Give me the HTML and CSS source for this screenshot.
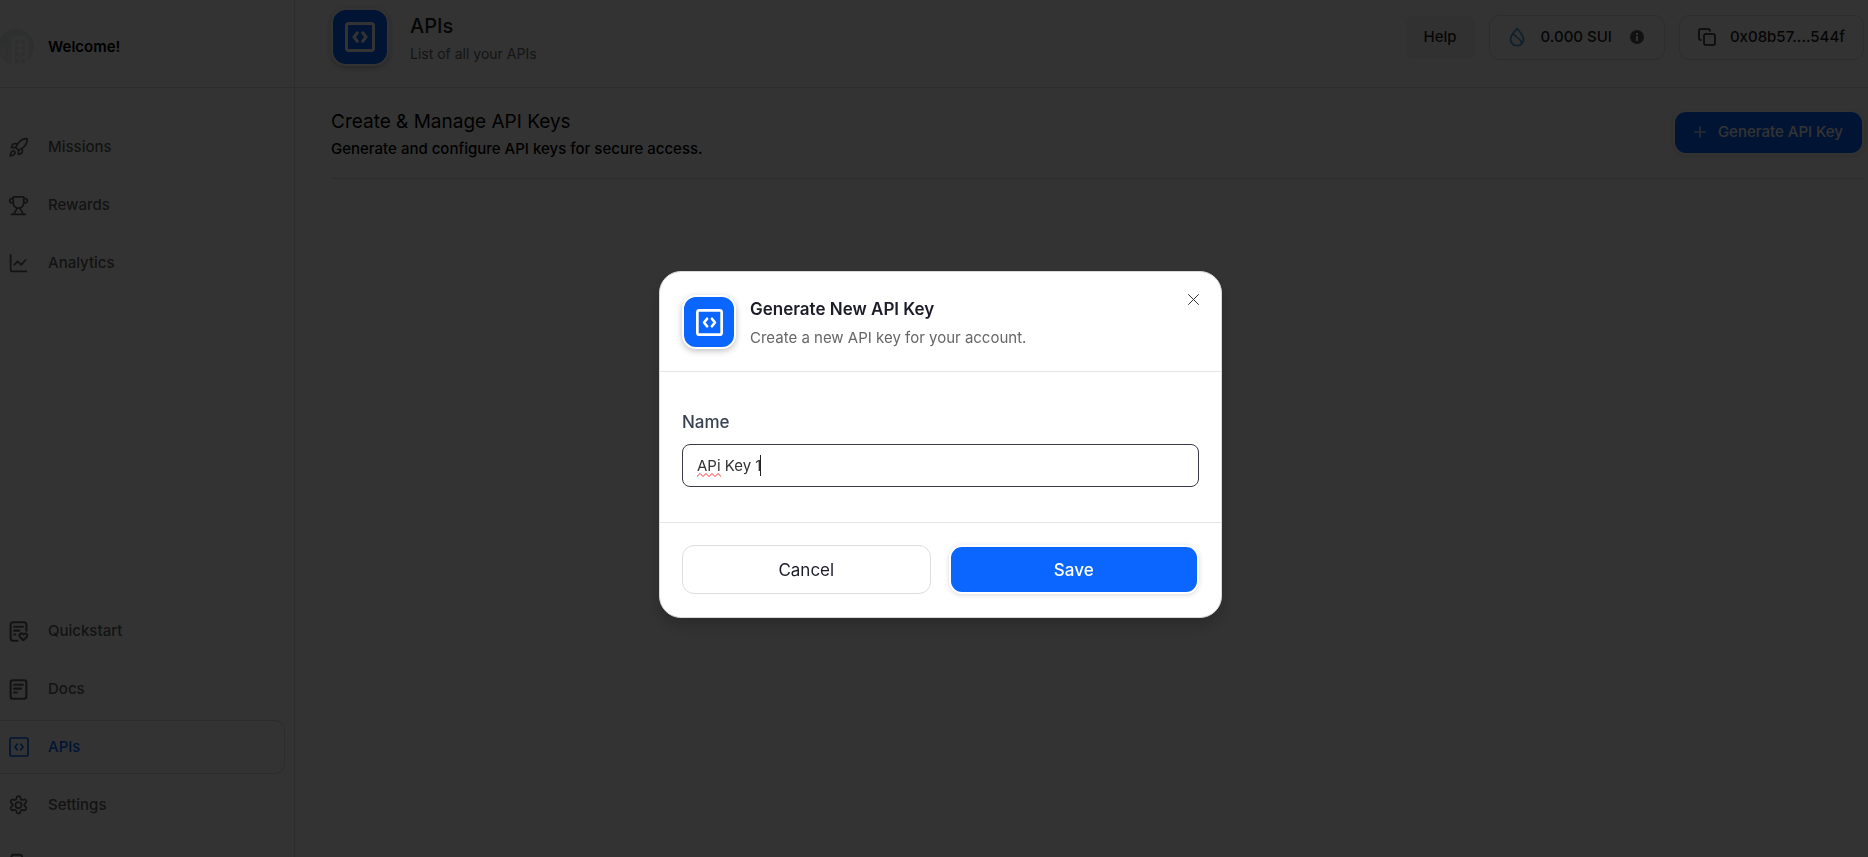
FILE: index.html
```html
<!DOCTYPE html>
<html lang="en">
<head>
<meta charset="utf-8">
<meta name="viewport" content="width=device-width, initial-scale=1">
<title>APIs</title>
<link rel="stylesheet" href="styles.css">
</head>
<body>
<svg class="sprite" aria-hidden="true">
  <symbol id="i-code" viewBox="0 0 20 20"><rect x="1" y="1" width="18" height="18" rx="1.5"/><path d="M8.2 7.2 6 10l2.2 2.8M11.8 7.2 14 10l-2.2 2.8"/></symbol>
</svg>
<div class="app">
  <aside class="sidebar">
    <div class="profile">
      <svg class="avatar" viewBox="0 0 36 36" aria-hidden="true">
        <defs><clipPath id="round"><circle cx="18" cy="18" r="18"/></clipPath></defs>
        <g clip-path="url(#round)">
          <rect width="36" height="36" fill="#e4e8ec"/>
          <path d="M13 36V9l2-2h13l2 2v27z" fill="#f7f7f8"/><path d="M0 16h12v20H0z" fill="#eef0f2"/>
          <g fill="#dfe4e8"><circle cx="19" cy="13" r="1.8"/><circle cx="25" cy="13" r="1.8"/><circle cx="19" cy="19" r="1.8"/><circle cx="25" cy="19" r="1.8"/><circle cx="19" cy="25" r="1.8"/><circle cx="25" cy="25" r="1.8"/><circle cx="19" cy="32" r="1.8"/><circle cx="25" cy="32" r="1.8"/><circle cx="9" cy="20" r="1.4"/><circle cx="9" cy="26" r="1.4"/><circle cx="9" cy="32" r="1.4"/></g>
        </g>
      </svg>
      <span>Welcome!</span>
    </div>
    <nav class="menu">
      <a href="#missions"><svg class="icon" viewBox="0 0 24 24"><path d="M4.5 16.5c-1.5 1.26-2 5-2 5s3.740-.5 5-2c.71-.84.7-2.130-.09-2.910a2.180 2.180 0 0 0-2.910-.09z"/><path d="m12 15-3-3a22 22 0 0 1 2-3.950A12.880 12.880 0 0 1 22 2c0 2.720-.78 7.500-6 11a22.350 22.350 0 0 1-4 2z"/><path d="M9 12H4s.55-3.030 2-4c1.620-1.080 5 0 5 0M12 15v5s3.030-.55 4-2c1.080-1.620 0-5 0-5"/></svg>Missions</a>
      <a href="#rewards"><svg class="icon" viewBox="0 0 24 24"><path d="M6 2h12v7a6 6 0 0 1-12 0zM6 4H4a2 2 0 0 0-2 2v.5A2.500 2.500 0 0 0 4.500 9H6M18 4h2a2 2 0 0 1 2 2v.5A2.500 2.500 0 0 1 19.500 9H18M4 22h16M10 15c0 3-3 3.500-3 7M14 15c0 3 3 3.500 3 7"/></svg>Rewards</a>
      <a href="#analytics"><svg class="icon" viewBox="0 0 24 24"><path d="M3 2v17a2 2 0 0 0 2 2h16M7 13.500l4-4 4 4L20 8"/></svg>Analytics</a>
    </nav>
    <nav class="menu menu-bottom">
      <a href="#quickstart"><svg class="icon icon-bold" viewBox="0 0 24 24"><path d="M21 11V4a2.500 2.500 0 0 0-2.500-2.500h-13A2.500 2.500 0 0 0 3 4v16a2.500 2.500 0 0 0 2.500 2.500H11M7 6.500h10M7 11h6M7 15.500h1.500M17.500 22l-3.800-3.800a2.300 2.300 0 0 1 3.300-3.300l.5.500.5-.5a2.300 2.300 0 0 1 3.300 3.300z"/></svg>Quickstart</a>
      <a href="#docs"><svg class="icon icon-bold" viewBox="0 0 24 24"><rect x="3" y="1.500" width="18" height="21" rx="2.500"/><path d="M7 6.500h10M7 11h8M7 15.500h3"/></svg>Docs</a>
      <a href="#apis" class="active" aria-current="page"><svg class="icon"><use href="#i-code"/></svg>APIs</a>
      <a href="#settings"><svg class="icon" viewBox="0 0 24 24"><path d="M9.700 3.200c.4-2.500 4.200-2.500 4.600 0l.2 1.200c.2 1 1.300 1.600 2.200 1.200l1.200-.4c2.300-.9 4.200 2.400 2.300 4l-1 .8c-.8.700-.8 1.900 0 2.600l1 .8c1.900 1.600 0 4.900-2.300 4l-1.200-.4c-.9-.4-2 .2-2.200 1.200l-.2 1.200c-.4 2.500-4.200 2.500-4.600 0l-.2-1.200c-.2-1-1.300-1.600-2.200-1.200l-1.200.4c-2.300.9-4.200-2.400-2.300-4l1-.8c.8-.7.8-1.900 0-2.600l-1-.8c-1.900-1.600 0-4.900 2.300-4l1.200.4c.9.400 2-.2 2.200-1.200z"/><circle cx="12" cy="11.500" r="3.500"/></svg>Settings</a>
      <a href="#logout" aria-label="Log out"><svg class="icon icon-bold" viewBox="0 0 24 24"><path d="M16 7V4a2 2 0 0 0-2-2H6a2 2 0 0 0-2 2v16a2 2 0 0 0 2 2h8a2 2 0 0 0 2-2v-3M10 12h12M19 9l3 3-3 3"/></svg></a>
    </nav>
  </aside>
  <main class="main">
    <header class="topbar">
      <span class="tile tile-lg"><svg><use href="#i-code"/></svg></span>
      <div class="heading"><h1>APIs</h1><p>List of all your APIs</p></div>
      <div class="actions">
        <button type="button" class="help">Help</button>
        <div class="pill"><svg class="drop" viewBox="0 0 16 20"><path d="M8 1.500c3 3.500 6.500 7 6.500 10.700a6.500 6.500 0 0 1-13 0C1.500 8.500 5 5 8 1.500zM4.500 6.500c0 3 8.500 5 8 10"/></svg><span>0.000 SUI</span><svg class="info" viewBox="0 0 14 14"><circle cx="7" cy="7" r="7"/><path d="M6 3h2v2H6zM6 6h2v5H6z"/></svg></div>
        <button type="button" class="pill wallet"><svg class="copy" viewBox="0 0 18 18"><rect x="6" y="6" width="11" height="11" rx="1.500"/><path d="M3 12H2.500A1.500 1.500 0 0 1 1 10.500v-8A1.500 1.500 0 0 1 2.500 1h8A1.500 1.500 0 0 1 12 2.500V3"/></svg><span>0x08b57....544f</span></button>
      </div>
    </header>
    <section class="section">
      <div class="section-text"><h2>Create &amp; Manage API Keys</h2><p>Generate and configure API keys for secure access.</p></div>
      <button type="button" class="primary generate"><svg viewBox="0 0 12 12"><path d="M6 0v12M0 6h12"/></svg>Generate API Key</button>
    </section>
  </main>
</div>
<div class="overlay">
  <form class="modal" role="dialog" aria-modal="true" aria-labelledby="modal-title">
    <div class="modal-head">
      <span class="tile"><svg><use href="#i-code"/></svg></span>
      <div class="modal-text"><h2 id="modal-title">Generate New API Key</h2><p>Create a new API key for your account.</p></div>
      <button type="button" class="close" aria-label="Close"><svg viewBox="0 0 11 11"><path d="M.5.5l10 10M10.500.5l-10 10"/></svg></button>
    </div>
    <div class="modal-body">
      <label for="key-name">Name</label>
      <div class="field">
        <input id="key-name" type="text" value="APi Key 1" spellcheck="false">
        <svg class="squiggle" viewBox="0 0 24 4" aria-hidden="true"><path d="M0 3.500l3-3 3 3 3-3 3 3 3-3 3 3 3-3 3 3"/></svg>
        <span class="caret"></span>
      </div>
    </div>
    <div class="modal-foot">
      <button type="button" class="cancel">Cancel</button>
      <button type="submit" class="primary save">Save</button>
    </div>
  </form>
</div>
</body>
</html>
```
FILE: styles.css
```css
* { box-sizing: border-box; }
body { margin: 0; overflow: hidden; background: #fff; color: #000; font: 500 15px/20px Inter, "Liberation Sans", sans-serif; }
h1, h2, p { margin: 0; }
button, input { font: inherit; color: inherit; }
button { cursor: pointer; }
svg { fill: none; stroke: currentColor; stroke-linecap: round; stroke-linejoin: round; flex: none; }
.sprite { position: absolute; width: 0; height: 0; }

.app { display: flex; height: 100vh; }
.sidebar { width: 295px; flex: none; display: flex; flex-direction: column; border-right: 1px solid #dedede; }
.profile { height: 88px; flex: none; display: flex; align-items: center; gap: 14px; padding-top: 6px; border-bottom: 1px solid #d9dbdd; font-weight: 600; }
.avatar { width: 36px; height: 36px; margin-left: -2px; stroke: none; }
.menu { display: flex; flex-direction: column; gap: 4px; padding: 32px 9px 0 0; }
.menu-bottom { margin-top: auto; margin-bottom: -33px; padding-top: 0; }
.menu a { height: 54px; flex: none; display: flex; align-items: center; gap: 19px; padding-left: 8px; border: 1px solid transparent; border-left: 0; border-radius: 0 10px 10px 0; color: #5f5f5f; text-decoration: none; }
.menu a.active { padding-left: 9px; color: #0a66ff; border-color: #d9d9d9; background: #fcfcfc; }
.icon { width: 21px; height: 21px; stroke-width: 2; }
.icon-bold { stroke-width: 2.4; }
.active .icon { width: 20px; height: 20px; stroke-width: 1.7; }

.main { flex: 1; min-width: 0; }
.topbar { height: 88px; display: flex; align-items: center; padding: 0 4px 13px 36px; border-bottom: 1px solid #dedede; }
.tile { width: 54px; height: 54px; flex: none; display: flex; align-items: center; justify-content: center; border: 2px solid #fff; border-radius: 14px; background: #0a66ff; color: #fff; box-shadow: 0 2px 6px rgba(0, 0, 0, .25); }
.tile svg { width: 27px; height: 27px; stroke-width: 2; }
.tile-lg { width: 58px; height: 58px; border-radius: 15px; }
.tile-lg svg { width: 30px; height: 30px; }
.heading { margin-left: 21px; padding-top: 2px; }
h1 { font-size: 20px; line-height: 28px; font-weight: 500; color: #222; }
.heading p { margin-top: 4px; font-size: 14px; font-weight: 400; color: #666; }
.actions { display: flex; align-items: center; gap: 14px; margin-left: auto; color: #222; }
.help { height: 43px; padding: 0 18px; border: 0; border-radius: 8px; background: #f4f4f4; }
.pill { height: 45px; display: flex; align-items: center; gap: 16px; padding: 0 20px 0 19px; border: 1px solid #dedede; border-radius: 10px; background: #fff; }
.drop { width: 16px; height: 20px; stroke: #4da2db; stroke-width: 1.8; }
.info { width: 14px; height: 14px; margin-left: 2px; fill: #555; stroke: none; }
.info path { fill: #fff; }
.copy { width: 18px; height: 18px; stroke-width: 1.5; }
.wallet { gap: 14px; padding: 0 18px; }
.section { display: flex; align-items: center; justify-content: space-between; height: 91px; margin: 0 4px 0 36px; border-bottom: 1px solid #dedede; }
.section-text { padding-top: 4px; }
.section h2 { font-size: 19px; line-height: 28px; font-weight: 400; }
.section p { line-height: 26px; }
.primary { border: 2px solid #fff; border-radius: 13px; background: #0a66ff; color: #fff; box-shadow: 0 1px 5px rgba(0, 0, 0, .15); }
.generate { height: 45px; display: flex; align-items: center; gap: 12px; margin-bottom: 2px; padding: 0 19px; }
.generate svg { width: 12px; height: 12px; stroke-width: 1.2; }

.overlay { position: fixed; inset: 0; display: flex; align-items: center; justify-content: center; padding: 32px 0 0 13px; background: rgba(0, 0, 0, .8); }
.modal { width: 563px; max-width: 100%; border: 1px solid #d9d9d9; border-radius: 22px; background: #fff; box-shadow: 0 8px 16px rgba(0, 0, 0, .2); }
.modal-head { display: flex; align-items: flex-start; padding: 23px 22px 20px; border-bottom: 1px solid #e5e5e5; }
.modal-text { margin: 0 auto 0 14px; }
.modal-text h2 { font-size: 17px; line-height: 28px; font-weight: 600; color: #1c1c28; }
.modal-text p { margin-top: 2px; line-height: 26px; font-weight: 400; color: #666; }
.close { display: flex; margin-top: -1px; padding: 0; border: 0; background: none; color: #333; }
.close svg { width: 11px; height: 11px; }
.modal-body { padding: 36px 22px 35px; }
label { display: block; margin-bottom: 8px; font-size: 17px; line-height: 28px; color: #374151; }
.field { position: relative; }
input { display: block; width: 100%; height: 43px; padding: 0 14px; border: 1px solid #3a3a4a; border-radius: 8px; outline: 0; background: #fff; font-weight: 400; color: #333; }
.squiggle { position: absolute; left: 15px; top: 29px; width: 24px; height: 4px; stroke: #f33; stroke-width: 1; }
.caret { position: absolute; left: 78px; top: 11px; width: 1px; height: 21px; background: #222; }
.modal-foot { display: flex; gap: 18px; padding: 22px 22px 23px; border-top: 1px solid #e5e5e5; font-size: 17px; color: #1c1c28; }
.modal-foot button { flex: 1; height: 49px; }
.cancel { border: 1px solid #dedede; border-radius: 12px; background: #fff; font-weight: 400; }
```
